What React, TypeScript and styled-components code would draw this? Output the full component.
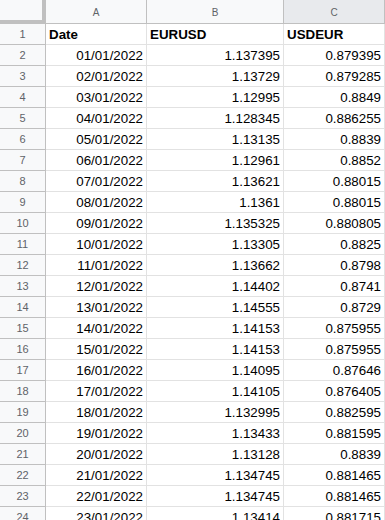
import React from 'react'
import styled, { createGlobalStyle } from 'styled-components'

const GlobalStyle = createGlobalStyle`
    html, body {
        margin: 0;
        padding: 0;
        background: #fff;
        overflow: hidden;
    }
`

const Grid = styled.div`
    display: grid;
    grid-template-columns: 46px 101px 137px 101px;
    grid-auto-rows: 21px;
    grid-template-rows: 24px;
    width: 385px;
    font-family: Arial, 'Liberation Sans', sans-serif;
`

const Corner = styled.div`
    background: #f8f9fa;
    border-right: 4px solid #c0c0c0;
    border-bottom: 4px solid #c0c0c0;
`

const ColHeader = styled.div<{ $active?: boolean }>`
    display: flex;
    align-items: center;
    justify-content: center;
    background: ${({ $active }) => ($active ? '#e8eaed' : '#f8f9fa')};
    border-right: 1px solid #c0c0c0;
    border-bottom: 1px solid #c0c0c0;
    color: #5f6368;
    font-size: 10px;
    padding-top: 1px;
`

const RowHeader = styled.div`
    display: flex;
    align-items: center;
    justify-content: center;
    background: #f8f9fa;
    border-right: 1px solid #c0c0c0;
    border-bottom: 1px solid #c0c0c0;
    color: #5f6368;
    font-size: 11px;
`

const Cell = styled.div<{ $bold?: boolean }>`
    display: flex;
    align-items: center;
    justify-content: ${({ $bold }) => ($bold ? 'flex-start' : 'flex-end')};
    padding: 0 3px;
    border-right: 1px solid #e2e2e2;
    border-bottom: 1px solid #e2e2e2;
    color: #000;
    font-size: 13.33px;
    font-weight: ${({ $bold }) => ($bold ? 700 : 400)};
    white-space: nowrap;
    overflow: hidden;
`

const rows: [string, string, string][] = [
    ['01/01/2022', '1.137395', '0.879395'],
    ['02/01/2022', '1.13729', '0.879285'],
    ['03/01/2022', '1.12995', '0.8849'],
    ['04/01/2022', '1.128345', '0.886255'],
    ['05/01/2022', '1.13135', '0.8839'],
    ['06/01/2022', '1.12961', '0.8852'],
    ['07/01/2022', '1.13621', '0.88015'],
    ['08/01/2022', '1.1361', '0.88015'],
    ['09/01/2022', '1.135325', '0.880805'],
    ['10/01/2022', '1.13305', '0.8825'],
    ['11/01/2022', '1.13662', '0.8798'],
    ['12/01/2022', '1.14402', '0.8741'],
    ['13/01/2022', '1.14555', '0.8729'],
    ['14/01/2022', '1.14153', '0.875955'],
    ['15/01/2022', '1.14153', '0.875955'],
    ['16/01/2022', '1.14095', '0.87646'],
    ['17/01/2022', '1.14105', '0.876405'],
    ['18/01/2022', '1.132995', '0.882595'],
    ['19/01/2022', '1.13433', '0.881595'],
    ['20/01/2022', '1.13128', '0.8839'],
    ['21/01/2022', '1.134745', '0.881465'],
    ['22/01/2022', '1.134745', '0.881465'],
    ['23/01/2022', '1.13414', '0.881715'],
]

export default function App() {
    return (
        <>
            <GlobalStyle />
            <Grid>
                <Corner />
                <ColHeader>A</ColHeader>
                <ColHeader>B</ColHeader>
                <ColHeader $active>C</ColHeader>

                <RowHeader>1</RowHeader>
                <Cell $bold>Date</Cell>
                <Cell $bold>EURUSD</Cell>
                <Cell $bold>USDEUR</Cell>

                {rows.map((row, i) => (
                    <React.Fragment key={row[0]}>
                        <RowHeader>{i + 2}</RowHeader>
                        {row.map((value, j) => (
                            <Cell key={j}>{value}</Cell>
                        ))}
                    </React.Fragment>
                ))}
            </Grid>
        </>
    )
}
